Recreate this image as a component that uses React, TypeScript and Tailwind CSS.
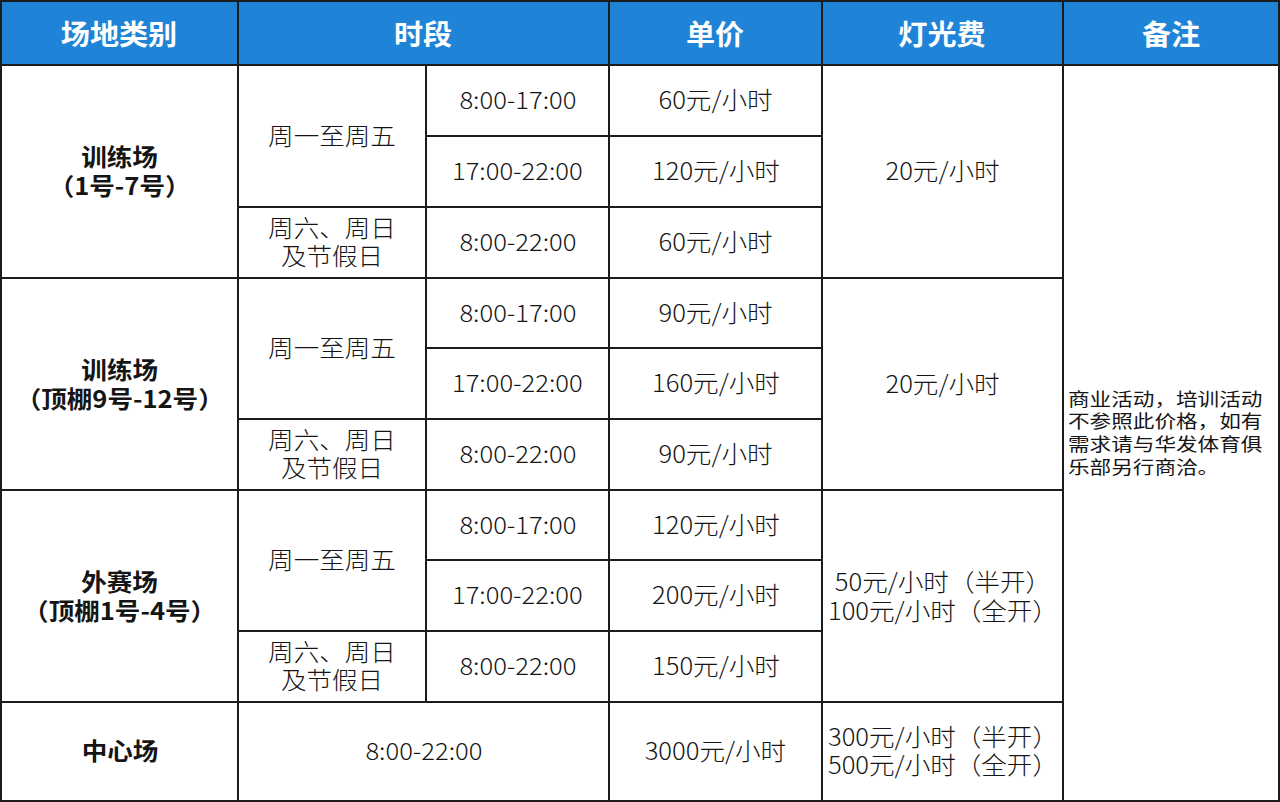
import React from "react";

const F = { fontFamily: '"Noto Sans CJK SC", "Noto Sans", sans-serif' };

function C({ cls, children }: { cls: string; children?: React.ReactNode }) {
  return (
    <div className={"bg-white flex items-center justify-center text-center text-[24px] leading-[28px] text-[#151515] pb-[3px] " + cls}>
      <div className="scale-x-[1.065] whitespace-nowrap">{children}</div>
    </div>
  );
}

function H({ cls, children }: { cls: string; children: React.ReactNode }) {
  return (
    <div className={"bg-[#1f84d7] flex items-center justify-center text-white text-[28px] font-bold " + cls}>
      <div className="scale-x-[1.04]">{children}</div>
    </div>
  );
}

export default function App() {
  const wk = (
    <>
      周六、周日
      <br />
      及节假日
    </>
  );
  return (
    <div style={F} className="w-[1280px] h-[802px] bg-white">
      <div className="grid w-[1280px] h-[802px] bg-[#1c1c1c] p-[2px] gap-[2px] grid-cols-[235px_186px_181px_211px_239px_214px] grid-rows-[62px_69px_69px_69px_68px_69px_69px_68px_69px_69px_97px]">
        <H cls="col-start-1 row-start-1">场地类别</H>
        <H cls="col-start-2 col-span-2 row-start-1">时段</H>
        <H cls="col-start-4 row-start-1">单价</H>
        <H cls="col-start-5 row-start-1">灯光费</H>
        <H cls="col-start-6 row-start-1">备注</H>

        {/* group 1 */}
        <C cls="col-start-1 row-start-2 row-span-3 font-bold leading-[29px]">
          训练场
          <br />
          （1号-7号）
        </C>
        <C cls="col-start-2 row-start-2 row-span-2 font-light">周一至周五</C>
        <C cls="col-start-3 row-start-2 font-light">8:00-17:00</C>
        <C cls="col-start-3 row-start-3 font-light">17:00-22:00</C>
        <C cls="col-start-2 row-start-4 leading-[27.5px] font-light">{wk}</C>
        <C cls="col-start-3 row-start-4 font-light">8:00-22:00</C>
        <C cls="col-start-4 row-start-2 font-light">60元/小时</C>
        <C cls="col-start-4 row-start-3 font-light">120元/小时</C>
        <C cls="col-start-4 row-start-4 font-light">60元/小时</C>
        <C cls="col-start-5 row-start-2 row-span-3 font-light">20元/小时</C>

        {/* group 2 */}
        <C cls="col-start-1 row-start-5 row-span-3 font-bold leading-[29px]">
          训练场
          <br />
          （顶棚9号-12号）
        </C>
        <C cls="col-start-2 row-start-5 row-span-2 font-light">周一至周五</C>
        <C cls="col-start-3 row-start-5 font-light">8:00-17:00</C>
        <C cls="col-start-3 row-start-6 font-light">17:00-22:00</C>
        <C cls="col-start-2 row-start-7 leading-[27.5px] font-light">{wk}</C>
        <C cls="col-start-3 row-start-7 font-light">8:00-22:00</C>
        <C cls="col-start-4 row-start-5 font-light">90元/小时</C>
        <C cls="col-start-4 row-start-6 font-light">160元/小时</C>
        <C cls="col-start-4 row-start-7 font-light">90元/小时</C>
        <C cls="col-start-5 row-start-5 row-span-3 font-light">20元/小时</C>

        {/* group 3 */}
        <C cls="col-start-1 row-start-8 row-span-3 font-bold leading-[29px]">
          外赛场
          <br />
          （顶棚1号-4号）
        </C>
        <C cls="col-start-2 row-start-8 row-span-2 font-light">周一至周五</C>
        <C cls="col-start-3 row-start-8 font-light">8:00-17:00</C>
        <C cls="col-start-3 row-start-9 font-light">17:00-22:00</C>
        <C cls="col-start-2 row-start-10 leading-[27.5px] font-light">{wk}</C>
        <C cls="col-start-3 row-start-10 font-light">8:00-22:00</C>
        <C cls="col-start-4 row-start-8 font-light">120元/小时</C>
        <C cls="col-start-4 row-start-9 font-light">200元/小时</C>
        <C cls="col-start-4 row-start-10 font-light">150元/小时</C>
        <C cls="col-start-5 row-start-8 row-span-3 font-light leading-[29px]">
          50元/小时（半开）
          <br />
          100元/小时（全开）
        </C>

        {/* center court */}
        <C cls="col-start-1 row-start-11 font-bold">中心场</C>
        <C cls="col-start-2 col-span-2 row-start-11 font-light">8:00-22:00</C>
        <C cls="col-start-4 row-start-11 font-light">3000元/小时</C>
        <C cls="col-start-5 row-start-11 leading-[28.5px] font-light">
          300元/小时（半开）
          <br />
          500元/小时（全开）
        </C>

        {/* remarks */}
        <div className="col-start-6 row-start-2 row-span-10 bg-white flex items-center pl-[4px] pb-[2px] text-[18px] leading-[22.7px] text-[#151515] overflow-hidden">
          <p className="scale-x-[1.2] origin-left whitespace-nowrap">
            商业活动，培训活动
            <br />
            不参照此价格，如有
            <br />
            需求请与华发体育俱
            <br />
            乐部另行商洽。
          </p>
        </div>
      </div>
    </div>
  );
}
